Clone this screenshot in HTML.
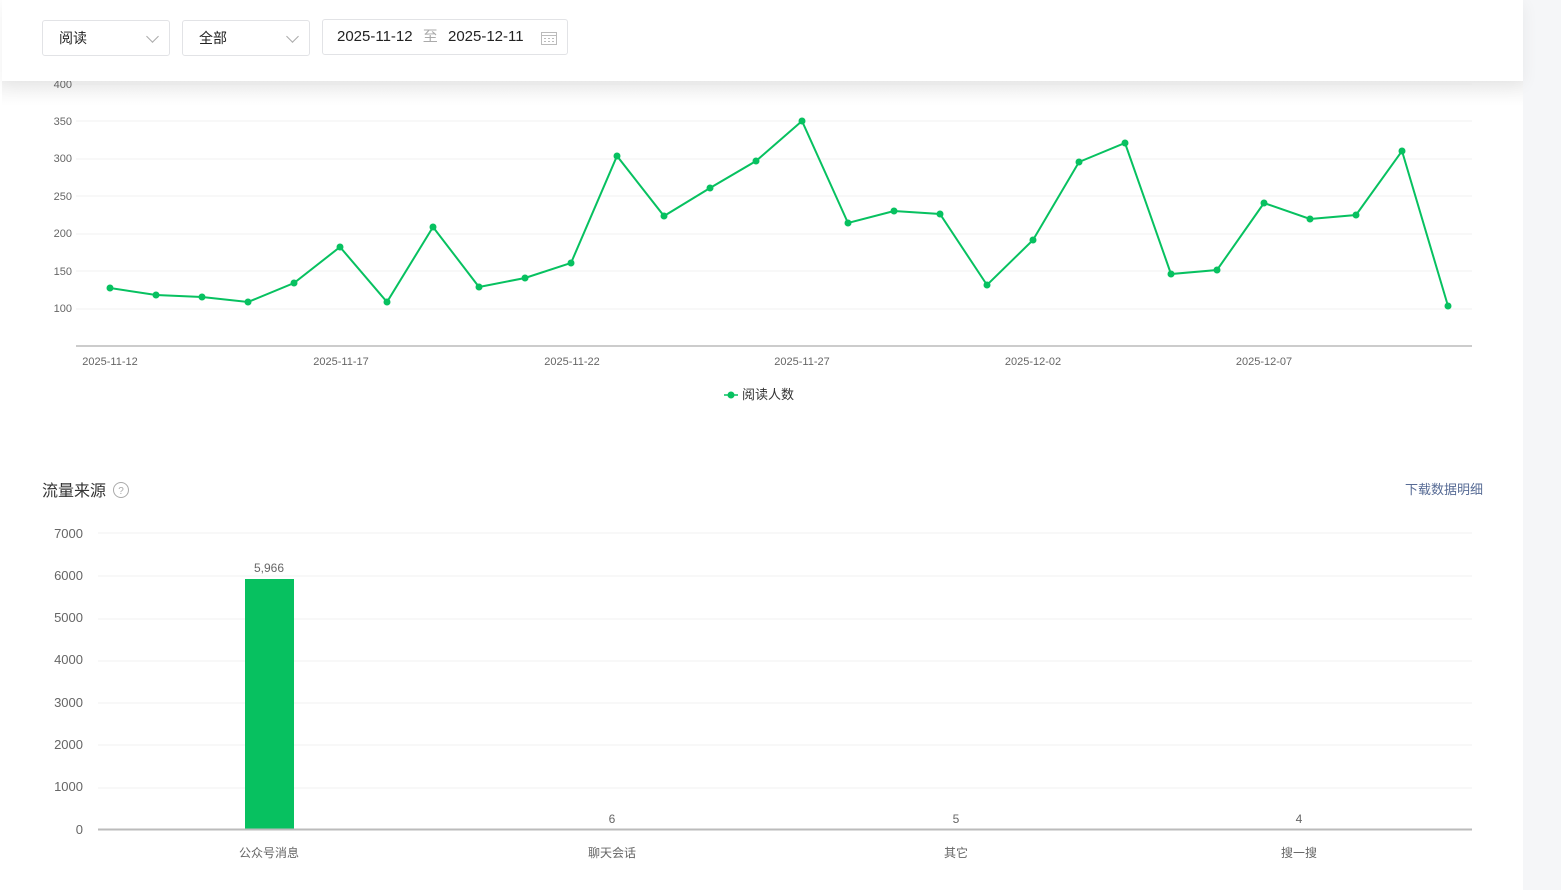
<!DOCTYPE html>
<html><head><meta charset="utf-8"><style>
body{margin:0;width:1561px;height:890px;background:#fff;font-family:"Liberation Sans","Noto Sans CJK SC",sans-serif;position:relative;overflow:hidden}
.side{position:absolute;left:1523px;top:0;width:38px;height:890px;background:#f5f6f8}
.hdr{position:absolute;left:2px;top:0;width:1521px;height:81px;background:#fff;box-shadow:0 4px 16px rgba(0,0,0,0.06);z-index:2}
.sel{position:absolute;top:20px;height:36px;border:1px solid #e2e3e6;border-radius:3px;box-sizing:border-box;font-size:14px;color:#222;line-height:34px}
.chev{position:absolute;right:12px;top:11px;width:8px;height:8px;border-right:1px solid #aaa;border-bottom:1px solid #aaa;transform:rotate(45deg)}
svg{position:absolute;left:0;top:0}
</style></head><body>
<div class="side"></div>
<div class="hdr">
<div class="sel" style="left:40px;width:128px;padding-left:16px">阅读<span class="chev"></span></div>
<div class="sel" style="left:180px;width:128px;padding-left:16px">全部<span class="chev"></span></div>
<div class="sel" style="left:320px;top:19px;width:246px;padding-left:14px;font-size:15px">2025-11-12 <span style="color:#aaa;margin:0 6px">至</span> 2025-12-11
<svg style="left:218px;top:11px" width="16" height="14"><rect x="0.5" y="1.5" width="15" height="12" fill="none" stroke="#bbb"/><line x1="0" y1="4.5" x2="16" y2="4.5" stroke="#bbb"/><g fill="#bbb"><rect x="3" y="7" width="2" height="1"/><rect x="7" y="7" width="2" height="1"/><rect x="11" y="7" width="2" height="1"/><rect x="3" y="10" width="2" height="1"/><rect x="7" y="10" width="2" height="1"/><rect x="11" y="10" width="2" height="1"/></g></svg></div>
</div>
<svg width="1523" height="890" font-family="Liberation Sans,Noto Sans CJK SC,sans-serif">
<defs><linearGradient id="g" x1="0" y1="0" x2="0" y2="1"><stop offset="0" stop-color="#f2f2f2"/><stop offset="1" stop-color="#fff"/></linearGradient></defs>
<rect x="2" y="81" width="1521" height="25" fill="url(#g)"/>
<g stroke="#f0f0f0"><line x1="76" y1="84" x2="1472" y2="84"/><line x1="76" y1="121" x2="1472" y2="121"/><line x1="76" y1="159" x2="1472" y2="159"/><line x1="76" y1="196" x2="1472" y2="196"/><line x1="76" y1="234" x2="1472" y2="234"/><line x1="76" y1="271" x2="1472" y2="271"/><line x1="76" y1="309" x2="1472" y2="309"/></g>
<line x1="76" y1="346" x2="1472" y2="346" stroke="#bbb" stroke-width="1.5"/>
<g font-size="11" fill="#666" text-anchor="end"><text x="72" y="88">400</text><text x="72" y="125">350</text><text x="72" y="162">300</text><text x="72" y="200">250</text><text x="72" y="237">200</text><text x="72" y="275">150</text><text x="72" y="312">100</text></g>
<g font-size="11" fill="#666" text-anchor="middle"><text x="110" y="365">2025-11-12</text><text x="341" y="365">2025-11-17</text><text x="572" y="365">2025-11-22</text><text x="802" y="365">2025-11-27</text><text x="1033" y="365">2025-12-02</text><text x="1264" y="365">2025-12-07</text></g>
<polyline fill="none" stroke="#07c160" stroke-width="2" points="110,288 156,295 202,297 248,302 294,283 340,247 387,302 433,227 479,287 525,278 571,263 617,156 664,216 710,188 756,161 802,121 848,223 894,211 940,214 987,285 1033,240 1079,162 1125,143 1171,274 1217,270 1264,203 1310,219 1356,215 1402,151 1448,306"/>
<g fill="#07c160"><circle cx="110" cy="288" r="3.5"/><circle cx="156" cy="295" r="3.5"/><circle cx="202" cy="297" r="3.5"/><circle cx="248" cy="302" r="3.5"/><circle cx="294" cy="283" r="3.5"/><circle cx="340" cy="247" r="3.5"/><circle cx="387" cy="302" r="3.5"/><circle cx="433" cy="227" r="3.5"/><circle cx="479" cy="287" r="3.5"/><circle cx="525" cy="278" r="3.5"/><circle cx="571" cy="263" r="3.5"/><circle cx="617" cy="156" r="3.5"/><circle cx="664" cy="216" r="3.5"/><circle cx="710" cy="188" r="3.5"/><circle cx="756" cy="161" r="3.5"/><circle cx="802" cy="121" r="3.5"/><circle cx="848" cy="223" r="3.5"/><circle cx="894" cy="211" r="3.5"/><circle cx="940" cy="214" r="3.5"/><circle cx="987" cy="285" r="3.5"/><circle cx="1033" cy="240" r="3.5"/><circle cx="1079" cy="162" r="3.5"/><circle cx="1125" cy="143" r="3.5"/><circle cx="1171" cy="274" r="3.5"/><circle cx="1217" cy="270" r="3.5"/><circle cx="1264" cy="203" r="3.5"/><circle cx="1310" cy="219" r="3.5"/><circle cx="1356" cy="215" r="3.5"/><circle cx="1402" cy="151" r="3.5"/><circle cx="1448" cy="306" r="3.5"/></g>
<line x1="724" y1="395" x2="738" y2="395" stroke="#07c160" stroke-width="1.5"/><circle cx="731" cy="395" r="3.5" fill="#07c160"/>
<text x="742" y="399" font-size="13" fill="#333">阅读人数</text>
<text x="42" y="496" font-size="16" fill="#333">流量来源</text>
<circle cx="121" cy="490" r="7.5" fill="none" stroke="#aaa"/><text x="121" y="494" font-size="10" fill="#aaa" text-anchor="middle">?</text>
<text x="1483" y="494" font-size="13" fill="#576b95" text-anchor="end">下载数据明细</text>
<g stroke="#f0f0f0"><line x1="98" y1="533" x2="1472" y2="533"/><line x1="98" y1="576" x2="1472" y2="576"/><line x1="98" y1="619" x2="1472" y2="619"/><line x1="98" y1="661" x2="1472" y2="661"/><line x1="98" y1="703" x2="1472" y2="703"/><line x1="98" y1="745" x2="1472" y2="745"/><line x1="98" y1="788" x2="1472" y2="788"/></g>
<g font-size="13" fill="#666" text-anchor="end"><text x="83" y="538">7000</text><text x="83" y="580">6000</text><text x="83" y="622">5000</text><text x="83" y="664">4000</text><text x="83" y="707">3000</text><text x="83" y="749">2000</text><text x="83" y="791">1000</text><text x="83" y="834">0</text></g>
<rect x="245" y="579" width="49" height="250" fill="#07c160"/>
<line x1="98" y1="829.5" x2="1472" y2="829.5" stroke="#bbb" stroke-width="2"/>
<g font-size="12" fill="#666" text-anchor="middle"><text x="269" y="572">5,966</text><text x="612" y="823">6</text><text x="956" y="823">5</text><text x="1299" y="823">4</text>
<text x="269" y="857">公众号消息</text><text x="612" y="857">聊天会话</text><text x="956" y="857">其它</text><text x="1299" y="857">搜一搜</text></g>
</svg>
</body></html>
